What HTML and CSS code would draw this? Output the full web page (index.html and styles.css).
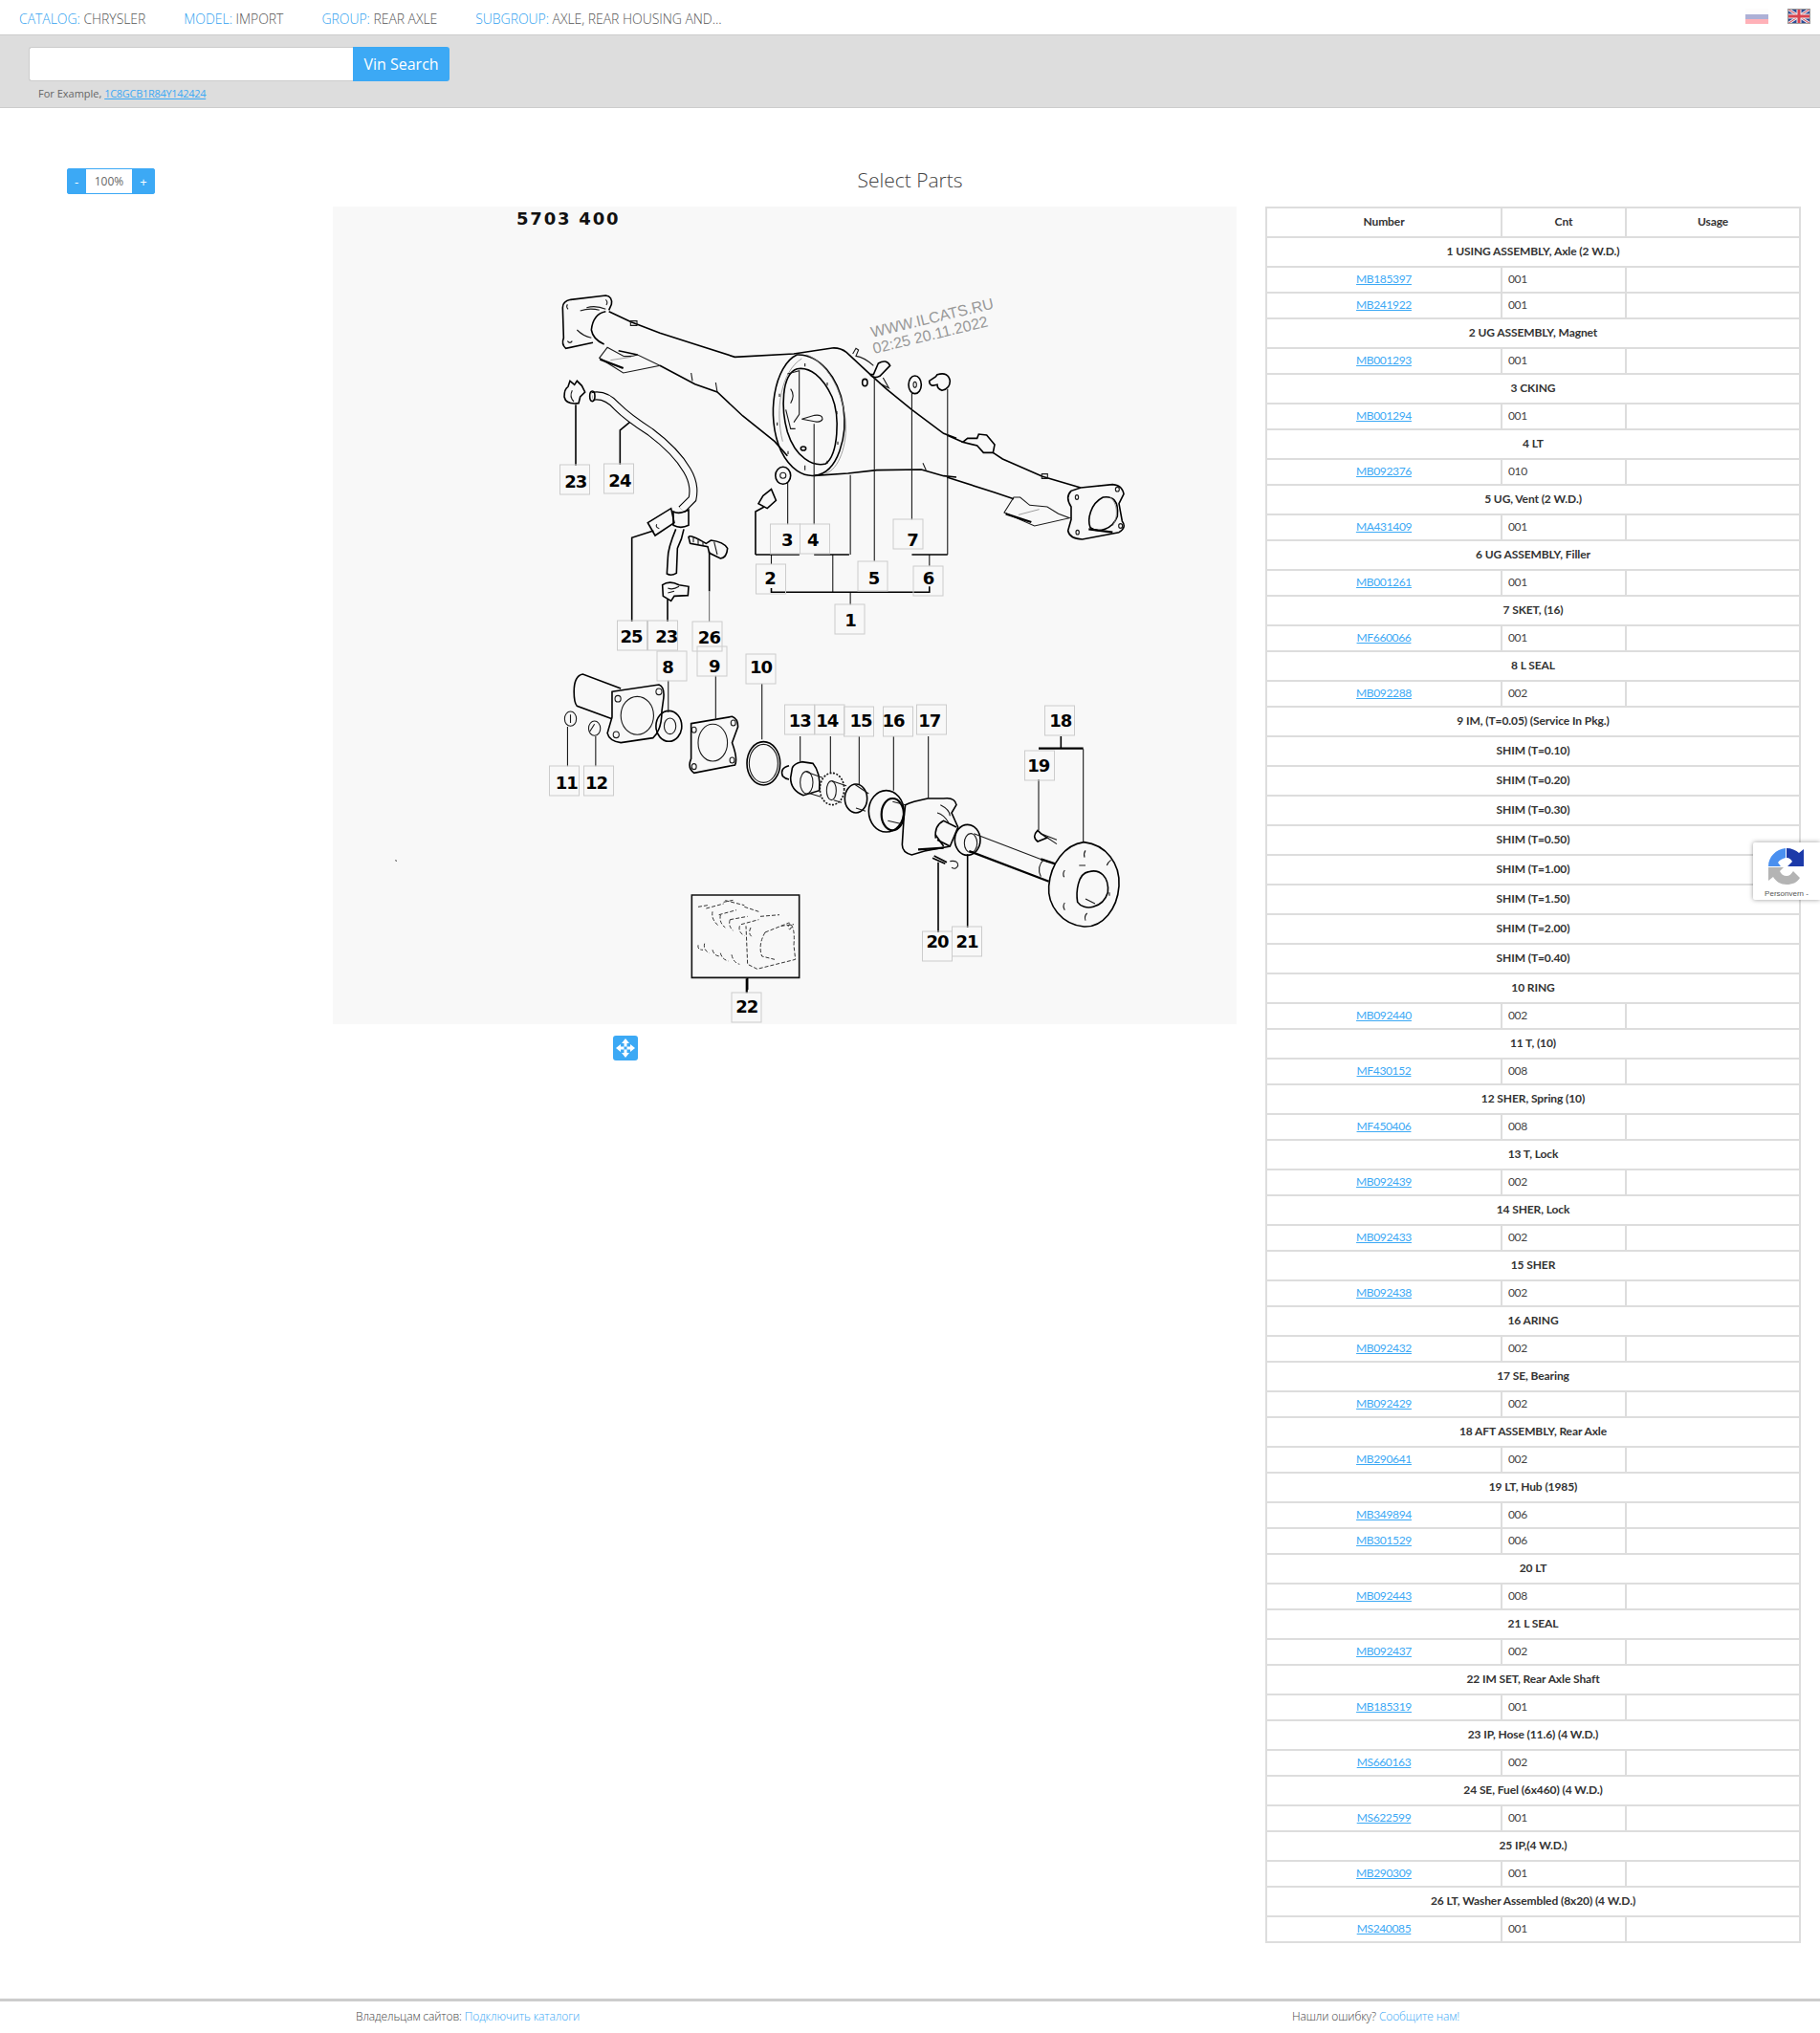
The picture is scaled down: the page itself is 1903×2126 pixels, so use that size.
FILE: index.html
```html
<!DOCTYPE html>
<html lang="en">
<head>
<meta charset="utf-8">
<title>Select Parts</title>
<link rel="stylesheet" href="styles.css">
</head>
<body>
<header class="topbar">
  <nav class="crumbs">
    <span class="crumb"><b>CATALOG:</b> CHRYSLER</span>
    <span class="crumb"><b>MODEL:</b> IMPORT</span>
    <span class="crumb"><b>GROUP:</b> REAR AXLE</span>
    <span class="crumb"><b>SUBGROUP:</b> AXLE, REAR HOUSING AND...</span>
  </nav>
  <div class="flags">
    <svg class="flag" viewBox="0 0 24 16"><rect width="24" height="6" fill="#fdfcfc"/><rect y="6" width="24" height="5" fill="#adb0d6"/><rect y="11" width="24" height="5" fill="#ffb1b8"/></svg>
    <svg class="flag" viewBox="0 0 24 16"><rect width="24" height="16" fill="#2b4a94"/><path d="M0 0L24 16M24 0L0 16" stroke="#e8e8ee" stroke-width="3"/><path d="M0 0L24 16M24 0L0 16" stroke="#d9434e" stroke-width="1"/><path d="M12 0V16M0 8H24" stroke="#eee" stroke-width="5"/><path d="M12 0V16M0 8H24" stroke="#d9434e" stroke-width="3"/><rect x=".5" y=".5" width="23" height="15" fill="none" stroke="#999"/></svg>
  </div>
</header>
<section class="search">
  <form class="search-form"><input class="search-input" type="text"><button class="search-btn" type="button">Vin Search</button></form>
  <p class="example">For Example, <a href="#">1C8GCB1R84Y142424</a></p>
</section>
<main class="main">
  <div class="title-row">
    <div class="zoom"><button class="zoom-btn" type="button">-</button><span class="zoom-val">100%</span><button class="zoom-btn" type="button">+</button></div>
    <h1 class="title">Select Parts</h1>
  </div>
  <div class="content">
    <div class="diagram-col">
      <svg class="diagram" viewBox="0 0 945 855" width="945" height="855">
        <g class="lines" transform="translate(222 79) scale(.33333)">
          <path class="thick" d="M80,55L190,42Q212,45 208,70L200,88M80,55Q55,60 55,80L58,175Q50,195 65,208L150,190"/>
          <path class="thick" d="M190,92Q150,100 145,150Q150,180 185,195"/>
          <path d="M130,80Q160,72 190,85M110,90Q140,80 170,88M100,150Q120,170 145,175M70,70Q65,78 72,85M70,185Q78,195 85,185M190,55Q198,62 192,72"/>
          <path class="thick" d="M200,92L270,125L360,160L470,195L595,235L780,225L900,207Q925,205 945,220L1020,290L1070,335L1150,400L1250,475L1290,490"/>
          <rect x="268" y="122" width="20" height="14"/>
          <path d="M195,205L170,238L245,285L360,262L290,228Q270,235 245,232Z"/>
          <path class="heavy" d="M172,242L245,270"/>
          <path class="soft" d="M205,245L270,235"/>
          <path class="thick" d="M230,215L290,228M360,262L470,320L540,345L620,420L720,500L760,545"/>
          <path d="M458,285L462,310M535,315L540,345"/>
          <path class="thick" d="M790,228C720,260 690,420 740,530C770,590 810,610 845,607C920,600 950,480 935,390C920,300 860,225 790,228Z"/>
          <path class="thick" d="M790,272C740,290 740,400 760,470C785,550 840,580 880,570C920,540 925,420 900,360C870,295 830,265 790,272Z"/>
          <path class="soft" d="M820,228C880,250 930,330 942,430C950,510 920,590 880,600M805,240C740,280 720,400 745,500"/>
          <path d="M760,288L797,278V415L780,440M770,335Q785,355 770,380M755,400L770,460L785,460"/>
          <path d="M805,430L845,418Q870,415 870,430Q865,442 845,437Z"/>
          <ellipse class="thick" cx="810" cy="522" rx="8" ry="6"/>
          <path d="M735,350V360M728,440V450M762,530V540M815,255V265M815,575V590M885,315V325M915,405V415M918,500V510M885,560V570"/>
          <path class="thick" d="M845,607L950,600L1040,590L1180,588L1250,608L1290,612"/>
          <path d="M1185,568L1195,590"/>
          <path d="M965,225L975,208L983,213L975,232Q1000,235 1030,262"/>
          <path class="thick" d="M1030,290L1045,255Q1070,240 1082,262L1050,295Q1030,305 1020,290Z"/>
          <path d="M1060,300L1078,332L1050,318"/>
          <ellipse class="thick" cx="1003" cy="315" rx="8" ry="11"/>
          <ellipse class="thick" cx="1160" cy="322" rx="20" ry="28"/>
          <ellipse cx="1160" cy="322" rx="5" ry="9"/>
          <path class="thick" d="M1205,310L1225,297L1230,290Q1265,280 1270,310Q1270,335 1245,340Q1230,335 1230,322Q1205,330 1205,310Z"/>
          <path class="thick" d="M60,360Q60,335 72,328L78,310L92,322L100,310L115,325L125,345L110,360L105,380Q65,385 60,360Z"/>
          <path d="M85,340Q75,360 90,375"/>
          <path class="hose-o" d="M148,358Q190,350 225,390Q260,425 330,470Q410,530 445,590Q472,635 462,680L428,714"/>
          <path class="hose-i" d="M148,358Q190,350 225,390Q260,425 330,470Q410,530 445,590Q472,635 462,680L428,714"/>
          <ellipse class="thick" cx="148" cy="358" rx="8" ry="16"/>
          <path class="thick" d="M96,385V575M265,440L235,465V572"/>
        </g>
        <g class="lines" transform="translate(242 314) scale(.33333)">
          <path class="thick" d="M262,50L335,5L345,50L285,90Z"/>
          <path d="M290,55Q285,65 298,68"/>
          <path class="thick" d="M342,15Q360,25 390,10V58Q365,70 342,58Z"/>
          <path class="thick" d="M350,70Q325,130 325,160L322,210Q335,218 352,208L355,130Q370,100 375,70"/>
          <path class="thick" d="M280,75L212,97V360"/>
          <path class="thick" d="M390,95Q395,85 445,115L460,105Q500,110 512,130Q510,160 490,162L455,145L450,125L395,115Z"/>
          <path d="M405,95V112M420,100V118M435,108V122M470,110L480,150"/>
          <path class="thick" d="M455,140V265"/>
          <path class="gray" d="M455,265V360"/>
          <path class="thick" d="M308,245Q330,230 360,245L390,250L388,278L345,280L335,295L310,280Z"/>
          <path d="M325,255Q340,262 360,250M325,270L345,265"/>
          <path class="thick" d="M324,290V360"/>
        </g>
        <g class="lines" transform="translate(642 214) scale(.33333)">
          <path class="thick" d="M0,75L50,97"/>
          <path class="thick" d="M50,97L65,85L95,85L100,72L125,75L150,105L145,130L115,130L95,108Z"/>
          <path class="thick" d="M145,130L175,150L300,205L420,240"/>
          <rect x="298" y="197" width="18" height="14"/>
          <path class="thick" d="M0,207L150,255L210,275"/>
          <path d="M180,318L210,270L230,270L260,295L315,300L350,322L385,335L275,360Z"/>
          <path class="heavy" d="M185,322L265,348"/>
          <path class="soft" d="M225,325L290,308"/>
          <path class="thick" d="M420,240L520,230Q550,232 555,260L540,290L550,345Q565,365 540,380L425,402Q385,400 380,375L390,340L390,300Q370,270 390,250Z"/>
          <path class="thick" d="M490,270C450,290 440,340 450,365C475,385 520,370 535,330C540,280 520,265 490,270Z"/>
          <path class="soft" d="M510,268C535,285 540,330 520,360"/>
          <path class="heavy" d="M445,370L520,380"/>
          <ellipse cx="408" cy="270" rx="5" ry="7"/><ellipse cx="410" cy="380" rx="5" ry="7"/><ellipse cx="535" cy="245" rx="6" ry="7"/><ellipse cx="545" cy="360" rx="6" ry="7"/>
        </g>
        <g class="lines" transform="translate(432 554) scale(.33333)">
          <ellipse class="thick" cx="55" cy="85" rx="52" ry="68"/><ellipse cx="55" cy="85" rx="45" ry="60"/>
          <path class="thick" d="M135,92Q105,100 115,125Q125,135 135,135"/>
          <path class="thick" d="M145,100Q150,85 175,80L210,85Q235,115 230,170L180,185Q140,170 140,130Z"/>
          <ellipse cx="190" cy="145" rx="20" ry="35"/>
          <path d="M190,112L240,130M195,178L235,190"/>
          <ellipse class="dash" cx="270" cy="165" rx="38" ry="50"/><ellipse cx="268" cy="170" rx="15" ry="30"/>
          <path d="M270,140L315,155M275,200L300,208"/>
          <ellipse class="thick" cx="345" cy="195" rx="35" ry="45"/>
          <path d="M340,150L385,180M345,225L375,235"/>
          <ellipse class="thick" cx="440" cy="235" rx="55" ry="65"/><ellipse class="heavy" cx="460" cy="245" rx="35" ry="50"/>
          <path d="M460,205L500,215M445,265L490,275"/>
          <path class="thick" d="M500,215Q520,205 570,195L620,195Q655,190 660,215L645,240L665,285L640,345L560,360L520,372Q490,365 490,340L495,260Z"/>
          <path d="M610,215Q640,230 640,250M600,240Q620,245 635,270"/>
          <path class="thick" d="M595,320Q590,280 620,265L660,285M600,325L640,345"/>
          <path class="heavy" d="M540,355L620,350"/>
          <path class="thick" d="M595,310L620,345"/>
          <ellipse class="thick" cx="695" cy="325" rx="40" ry="48"/><ellipse cx="705" cy="335" rx="20" ry="30"/>
          <path d="M715,305L950,395"/>
          <path class="heavy" d="M925,385L970,400M700,360L950,455"/>
          <path d="M935,385Q910,410 925,440"/>
          <path class="thick" d="M1060,332C1130,340 1175,400 1170,470C1165,540 1120,600 1060,597C990,590 945,530 950,470C955,400 1000,340 1060,332Z"/>
          <path class="thick" d="M1075,425C1040,430 1035,490 1040,520C1060,550 1120,540 1135,490C1140,440 1110,415 1075,425Z"/>
          <path d="M1065,358Q1058,368 1062,380M1145,388Q1135,395 1132,405M1000,420Q992,430 998,442M1000,522Q992,532 1000,545M1070,555Q1060,565 1065,578M1140,490V500M1045,405H1065M1065,510L1095,525"/>
          <path class="thick" d="M915,295Q895,315 915,330L945,318L925,305Z"/>
          <path d="M925,305L975,325M945,318L975,338"/>
          <path class="thick" d="M590,375L630,395M585,382L625,400"/>
          <path d="M640,392Q665,388 665,405Q660,420 645,412"/>
          <path d="M170,0V80M265,0V115M355,0V150M463,0V170M572,0V195M918,135V295M1058,40V332"/>
          <path class="heavy" d="M918,38H1058"/>
          <path class="thick" d="M988,0V38M603,395V615M695,370V600"/>
        </g>
        <g class="lines" transform="translate(367 709) scale(.33333)">
          <rect class="box" x="25" y="33" width="337" height="259"/>
          <path class="thick" d="M200,293V330"/>
          <path class="spec" d="M45,70L75,65M125,55L160,48M70,75L125,60M110,95L165,80M145,110L200,100M180,125L235,110M240,100L300,95M190,70L235,85M130,50L190,65"/>
          <path class="spec" d="M90,85Q85,110 110,130M115,95Q110,120 130,135M145,110Q138,130 155,145M175,130Q170,150 190,160M210,135Q200,155 215,165"/>
          <path class="spec" d="M45,190Q42,205 60,205M65,185Q60,205 80,215M90,205Q95,225 115,225M115,215Q120,235 140,240M150,220Q155,245 175,250"/>
          <path class="spec" d="M255,150Q232,190 245,225L285,235M255,150L330,120Q350,130 345,190L350,235L230,265L200,250L195,130"/>
          <path class="spec" d="M305,130L345,125"/>
          <ellipse class="spec" cx="332" cy="133" rx="5" ry="7"/>
        </g>
        <g class="lines" transform="translate(-8 -6) scale(.6122 .3333)">
          <path class="thick" d="M748,925L762,905L770,940L755,965L740,950Z"/>
          <ellipse class="thick" cx="782" cy="862" rx="13" ry="27"/><ellipse cx="782" cy="862" rx="5" ry="9"/>
          <path d="M790,885V1015M835,700V1015M938,555V1130M1002,600V1000M897,860V1110M1063,590V1110M1032,1110V1145M762,1110V1140M867,1110V1228M897,1228V1267"/>
          <path class="thick" d="M735,1110H810M735,1110V975L750,960M835,1110H895M1002,1110H1063M762,1215V1228H1032V1210"/>
        </g>
        <g class="lines" transform="translate(-8 444) scale(.6122 .3333)">
          <path class="thick" d="M505,180L440,135Q425,140 425,190Q425,225 430,235L490,275"/>
          <path class="thick" d="M490,190L570,168Q580,175 578,210L575,250Q575,310 560,335L505,350Q485,345 482,320L490,270Z"/>
          <ellipse cx="533" cy="265" rx="28" ry="60"/><ellipse cx="500" cy="212" rx="5" ry="10"/><ellipse cx="570" cy="190" rx="5" ry="10"/><ellipse cx="497" cy="325" rx="5" ry="10"/>
          <ellipse class="thick" cx="587" cy="298" rx="22" ry="48"/><ellipse cx="589" cy="298" rx="10" ry="25"/>
          <path class="thick" d="M625,290L695,268Q705,275 705,300L695,350Q705,400 700,420L630,445Q618,430 625,400Z"/>
          <ellipse cx="662" cy="350" rx="25" ry="58"/><ellipse cx="630" cy="310" rx="4" ry="9"/><ellipse cx="697" cy="288" rx="4" ry="9"/><ellipse cx="630" cy="425" rx="4" ry="9"/><ellipse cx="695" cy="405" rx="4" ry="9"/>
          <ellipse cx="419" cy="275" rx="10" ry="23"/><ellipse cx="460" cy="305" rx="10" ry="23"/>
          <path d="M419,262V288M460,292L452,315"/>
          <path class="dot" d="M120,718L122,722"/>
          <path d="M586,155V255M667,140V275M746,165V340M414,300V424M462,330V424"/>
          <path class="heavy" d="M720,1090V1135"/>
        </g>
        <text class="stamp" x="192" y="19">5703 400</text>
        <g class="watermark">
          <text transform="translate(564 137) rotate(-13.5)">WWW.ILCATS.RU</text>
          <text transform="translate(566 154) rotate(-13.5)">02:25 20.11.2022</text>
        </g>
        <g class="pins">
          <rect x="237.5" y="270" width="31" height="31"/><text x="253.8" y="294">23</text>
          <rect x="283.5" y="269" width="31" height="31"/><text x="299.9" y="293">24</text>
          <rect x="297.5" y="433" width="31" height="31"/><text x="312" y="456">25</text>
          <rect x="329.5" y="433" width="31" height="31"/><text x="348.7" y="456">23</text>
          <rect x="376" y="434" width="31" height="31"/><text x="393.4" y="457">26</text>
          <rect x="457.5" y="332" width="31" height="31"/><text x="474.7" y="355">3</text>
          <rect x="488.5" y="332" width="31" height="31"/><text x="501.8" y="355">4</text>
          <rect x="586" y="327" width="31" height="31"/><text x="606" y="355">7</text>
          <rect x="442.5" y="374" width="31" height="31"/><text x="457" y="395">2</text>
          <rect x="549" y="371" width="31" height="31"/><text x="565.6" y="395">5</text>
          <rect x="607" y="376" width="31" height="31"/><text x="622.5" y="395">6</text>
          <rect x="525" y="416" width="31" height="31"/><text x="541" y="439">1</text>
          <rect x="339" y="465" width="31" height="31"/><text x="350" y="488">8</text>
          <rect x="381" y="460" width="31" height="31"/><text x="398.8" y="487">9</text>
          <rect x="432" y="468" width="31" height="31"/><text x="447.6" y="488">10</text>
          <rect x="472.5" y="521" width="31" height="31"/><text x="488.3" y="544">13</text>
          <rect x="504" y="521" width="31" height="31"/><text x="516.7" y="544">14</text>
          <rect x="534.5" y="523" width="31" height="31"/><text x="552" y="544">15</text>
          <rect x="575.5" y="523" width="31" height="31"/><text x="586" y="544">16</text>
          <rect x="610.5" y="521" width="31" height="31"/><text x="623.8" y="544">17</text>
          <rect x="744.5" y="522" width="31" height="31"/><text x="760.7" y="544">18</text>
          <rect x="723.5" y="569" width="31" height="31"/><text x="737.7" y="591">19</text>
          <rect x="226.5" y="585" width="31" height="31"/><text x="244.3" y="609">11</text>
          <rect x="262.5" y="585" width="31" height="31"/><text x="275.5" y="609">12</text>
          <rect x="616.5" y="758" width="31" height="31"/><text x="632" y="775">20</text>
          <rect x="647.5" y="753" width="31" height="31"/><text x="663" y="775">21</text>
          <rect x="417" y="822" width="31" height="31"/><text x="432.7" y="843">22</text>
        </g>
      </svg>
      <button class="move-btn" type="button" aria-label="Move">
        <svg viewBox="0 0 26 26" width="26" height="26"><path fill="#fff" d="M13 3L17 8H14.5V11.5H11.5V8H9ZM13 23L9 18H11.5V14.5H14.5V18H17ZM3 13L8 9V11.5H11.5V14.5H8V17ZM23 13L18 17V14.5H14.5V11.5H18V9Z"/></svg>
      </button>
    </div>
    <table class="parts">
      <colgroup><col class="c1"><col class="c2"><col class="c3"></colgroup>
      <thead><tr class="grp"><th>Number</th><th>Cnt</th><th>Usage</th></tr></thead>
      <tbody>
        <tr class="grp"><th colspan="3">1 USING ASSEMBLY, Axle (2 W.D.)</th></tr>
        <tr><td class="num"><a href="#">MB185397</a></td><td>001</td><td></td></tr>
        <tr><td class="num"><a href="#">MB241922</a></td><td>001</td><td></td></tr>
        <tr class="grp"><th colspan="3">2 UG ASSEMBLY, Magnet</th></tr>
        <tr><td class="num"><a href="#">MB001293</a></td><td>001</td><td></td></tr>
        <tr class="grp"><th colspan="3">3 CKING</th></tr>
        <tr><td class="num"><a href="#">MB001294</a></td><td>001</td><td></td></tr>
        <tr class="grp"><th colspan="3">4 LT</th></tr>
        <tr><td class="num"><a href="#">MB092376</a></td><td>010</td><td></td></tr>
        <tr class="grp"><th colspan="3">5 UG, Vent (2 W.D.)</th></tr>
        <tr><td class="num"><a href="#">MA431409</a></td><td>001</td><td></td></tr>
        <tr class="grp"><th colspan="3">6 UG ASSEMBLY, Filler</th></tr>
        <tr><td class="num"><a href="#">MB001261</a></td><td>001</td><td></td></tr>
        <tr class="grp"><th colspan="3">7 SKET, (16)</th></tr>
        <tr><td class="num"><a href="#">MF660066</a></td><td>001</td><td></td></tr>
        <tr class="grp"><th colspan="3">8 L SEAL</th></tr>
        <tr><td class="num"><a href="#">MB092288</a></td><td>002</td><td></td></tr>
        <tr class="grp"><th colspan="3">9 IM, (T=0.05) (Service In Pkg.)</th></tr>
        <tr class="grp"><th colspan="3">SHIM (T=0.10)</th></tr>
        <tr class="grp"><th colspan="3">SHIM (T=0.20)</th></tr>
        <tr class="grp"><th colspan="3">SHIM (T=0.30)</th></tr>
        <tr class="grp"><th colspan="3">SHIM (T=0.50)</th></tr>
        <tr class="grp"><th colspan="3">SHIM (T=1.00)</th></tr>
        <tr class="grp"><th colspan="3">SHIM (T=1.50)</th></tr>
        <tr class="grp"><th colspan="3">SHIM (T=2.00)</th></tr>
        <tr class="grp"><th colspan="3">SHIM (T=0.40)</th></tr>
        <tr class="grp"><th colspan="3">10 RING</th></tr>
        <tr><td class="num"><a href="#">MB092440</a></td><td>002</td><td></td></tr>
        <tr class="grp"><th colspan="3">11 T, (10)</th></tr>
        <tr><td class="num"><a href="#">MF430152</a></td><td>008</td><td></td></tr>
        <tr class="grp"><th colspan="3">12 SHER, Spring (10)</th></tr>
        <tr><td class="num"><a href="#">MF450406</a></td><td>008</td><td></td></tr>
        <tr class="grp"><th colspan="3">13 T, Lock</th></tr>
        <tr><td class="num"><a href="#">MB092439</a></td><td>002</td><td></td></tr>
        <tr class="grp"><th colspan="3">14 SHER, Lock</th></tr>
        <tr><td class="num"><a href="#">MB092433</a></td><td>002</td><td></td></tr>
        <tr class="grp"><th colspan="3">15 SHER</th></tr>
        <tr><td class="num"><a href="#">MB092438</a></td><td>002</td><td></td></tr>
        <tr class="grp"><th colspan="3">16 ARING</th></tr>
        <tr><td class="num"><a href="#">MB092432</a></td><td>002</td><td></td></tr>
        <tr class="grp"><th colspan="3">17 SE, Bearing</th></tr>
        <tr><td class="num"><a href="#">MB092429</a></td><td>002</td><td></td></tr>
        <tr class="grp"><th colspan="3">18 AFT ASSEMBLY, Rear Axle</th></tr>
        <tr><td class="num"><a href="#">MB290641</a></td><td>002</td><td></td></tr>
        <tr class="grp"><th colspan="3">19 LT, Hub (1985)</th></tr>
        <tr><td class="num"><a href="#">MB349894</a></td><td>006</td><td></td></tr>
        <tr><td class="num"><a href="#">MB301529</a></td><td>006</td><td></td></tr>
        <tr class="grp"><th colspan="3">20 LT</th></tr>
        <tr><td class="num"><a href="#">MB092443</a></td><td>008</td><td></td></tr>
        <tr class="grp"><th colspan="3">21 L SEAL</th></tr>
        <tr><td class="num"><a href="#">MB092437</a></td><td>002</td><td></td></tr>
        <tr class="grp"><th colspan="3">22 IM SET, Rear Axle Shaft</th></tr>
        <tr><td class="num"><a href="#">MB185319</a></td><td>001</td><td></td></tr>
        <tr class="grp"><th colspan="3">23 IP, Hose (11.6) (4 W.D.)</th></tr>
        <tr><td class="num"><a href="#">MS660163</a></td><td>002</td><td></td></tr>
        <tr class="grp"><th colspan="3">24 SE, Fuel (6x460) (4 W.D.)</th></tr>
        <tr><td class="num"><a href="#">MS622599</a></td><td>001</td><td></td></tr>
        <tr class="grp"><th colspan="3">25 IP,(4 W.D.)</th></tr>
        <tr><td class="num"><a href="#">MB290309</a></td><td>001</td><td></td></tr>
        <tr class="grp"><th colspan="3">26 LT, Washer Assembled (8x20) (4 W.D.)</th></tr>
        <tr><td class="num"><a href="#">MS240085</a></td><td>001</td><td></td></tr>
      </tbody>
    </table>
  </div>
</main>
<footer class="footer">
  <p class="foot-a">Владельцам сайтов: <a href="#">Подключить каталоги</a></p>
  <p class="foot-b">Нашли ошибку? <a href="#">Сообщите нам!</a></p>
</footer>
<aside class="recaptcha">
  <svg class="rc-icon" viewBox="0 0 38 39" width="38" height="39">
    <path fill="#4a90f0" d="M0 19C0 9 8 1 18 0V10C15 11 12 12 10 15L13 19H0Z"/>
    <path fill="#1c3aa9" d="M19 0C24 0 29 2 32 5L37 1V19H20L25 14C24 12 22 10 19 10Z"/>
    <path fill="#b4b4b4" d="M0 20V34L5 30C8 35 13 38 19 38C25 38 30 36 33 31L26 24C24 27 22 29 19 29C16 29 13 27 12 24L16 20Z"/>
  </svg>
  <span class="rc-text">Personvern -<br>Vilkår</span>
</aside>
</body>
</html>
```

FILE: styles.css
```css
* { box-sizing: border-box; }
html, body { margin: 0; padding: 0; }
body { position: relative; height: 2126px; overflow: hidden; background: #fff; color: #666; font-family: "Open Sans", "Liberation Sans", sans-serif; }
a { color: #3ca9f5; }
p, h1 { margin: 0; }

.topbar { height: 37px; display: flex; justify-content: space-between; align-items: flex-start; border-bottom: 1px solid #ccc; background: #fff; }
.crumbs { display: flex; padding: 11px 0 0 20px; gap: 40px; font-size: 14px; font-weight: 300; line-height: 18px; color: #555; letter-spacing: -.05px; }
.crumb b { font-weight: 300; color: #2f9ff0; }
.flags { display: flex; gap: 20px; padding: 9px 10px 0 0; }
.flag { width: 24px; height: 16px; display: block; }

.search { height: 76px; background: #ddd; border-bottom: 1px solid #ccc; padding: 12px 0 0 30px; }
.search-form { display: flex; height: 36px; }
.search-input { width: 339px; height: 36px; border: 1px solid #ccc; border-right: 0; border-radius: 3px 0 0 3px; background: #fff; padding: 0 8px; }
.search-btn { width: 101px; height: 36px; border: 0; border-radius: 0 3px 3px 0; background: #3ca9f5; color: #fff; font: 400 16px "Open Sans", sans-serif; padding: 0; }
.example { margin: 5px 0 0 10px; font-size: 11px; line-height: 15px; color: #666; }
.example a { letter-spacing: -.3px; }

.main { position: relative; }
.title-row { height: 103px; position: relative; padding-top: 60px; }
.zoom { position: absolute; left: 70px; top: 63px; width: 92px; height: 27px; display: flex; border-radius: 3px; overflow: hidden; background: #3ca9f5; }
.zoom-btn { width: 20px; border: 0; padding: 0; background: #3ca9f5; color: #fff; font: 400 13px "Open Sans", sans-serif; }
.zoom-btn:last-child { width: 24px; }
.zoom-val { width: 48px; margin: 1px 0; background: #fff; color: #666; font-size: 12px; font-weight: 400; line-height: 25px; text-align: center; }
.title { font-size: 21px; font-weight: 300; line-height: 30px; text-align: center; color: #444; }

.content { display: flex; align-items: flex-start; gap: 30px; padding-left: 348px; }
.diagram-col { width: 945px; flex: none; }
.diagram { display: block; background: #f8f8f8; }
.move-btn { display: block; width: 26px; height: 26px; margin: 12px 0 0 293px; padding: 0; border: 0; border-radius: 3px; background: #3ca9f5; }
.move-btn svg { display: block; }

.lines path, .lines ellipse, .lines rect { fill: none; stroke: #1a1a1a; stroke-width: 1.1; vector-effect: non-scaling-stroke; }
.lines .thick { stroke: #000; stroke-width: 1.6; }
.lines .heavy { stroke: #000; stroke-width: 2.2; }
.lines .box { stroke: #111; stroke-width: 1.6; }
.lines .soft { stroke: #888; stroke-width: .8; }
.lines .gray { stroke: #666; stroke-width: 1; }
.lines .spec { stroke: #333; stroke-width: 1; stroke-dasharray: 4 2; }
.lines .dash { stroke-dasharray: 2 1.5; stroke: #111; stroke-width: 1.6; }
.lines .dot { stroke: #444; }
.lines .hose-o { stroke: #000; stroke-width: 9; }
.lines .hose-i { stroke: #f8f8f8; stroke-width: 6.8; }
.stamp { font: 700 18px "DejaVu Sans", sans-serif; letter-spacing: 1.8px; fill: #111; }
.watermark text { font: 400 16px "Liberation Sans", sans-serif; fill: #999; }
.pins rect { fill: none; stroke: #ccc; stroke-width: 1; }
.pins text { font: 700 18px "DejaVu Sans", sans-serif; text-anchor: middle; fill: #000; letter-spacing: -1px; }

.parts { width: 560px; flex: none; table-layout: fixed; border-collapse: collapse; border: 2px solid #ddd; font-family: Lato, "Open Sans", sans-serif; font-size: 12px; color: #444; }
.c1 { width: 246px; }
.c2 { width: 130px; }
.parts tr { height: 27px; }
.parts tr.grp { height: 31px; }
.parts th, .parts td { border: 2px solid #ddd; padding: 0 6px 2px; line-height: 16px; }
.parts td { letter-spacing: -.35px; }
.parts th { text-align: center; font-weight: 700; color: #333; letter-spacing: -.1px; }
.parts .num { text-align: center; }

.footer { position: absolute; left: 0; right: 0; top: 2090px; height: 36px; border-top: 3px solid #ccc; font-size: 12px; font-weight: 300; line-height: 16px; color: #444; letter-spacing: -.12px; }
.foot-a { position: absolute; left: 372px; top: 8px; }
.foot-b { position: absolute; left: 1351px; top: 8px; }
.footer a { text-decoration: none; }

.recaptcha { position: absolute; left: 1833px; top: 881px; width: 70px; height: 60px; background: #fff; border-radius: 2px 0 0 2px; box-shadow: 0 0 5px rgba(0,0,0,.4); overflow: hidden; text-align: center; }
.rc-icon { display: block; margin: 6px 0 0 16px; }
.rc-text { display: block; margin-top: 3px; font: 400 8px/11px "Liberation Sans", sans-serif; color: #555; }
```
